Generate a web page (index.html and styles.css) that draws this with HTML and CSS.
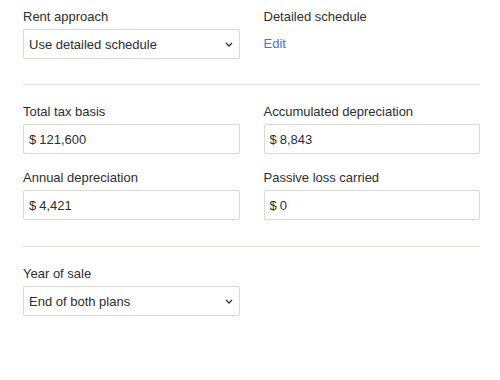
FILE: index.html
```html
<!DOCTYPE html>
<html lang="en">
<head>
    <meta charset="UTF-8">
    <title>Rental property</title>
    <link rel="stylesheet" href="styles.css">
</head>
<body>
    <div class="panel">
        <div class="section grid">
            <div class="field">
                <div class="label">Rent approach</div>
                <div class="select">
                    <span>Use detailed schedule</span>
                    <svg class="chev" width="8" height="5" viewBox="0 0 8 5"><path d="M1 1l3 3 3-3" fill="none" stroke="#333" stroke-width="1.3"/></svg>
                </div>
            </div>
            <div class="field">
                <div class="label">Detailed schedule</div>
                <a class="link" href="#">Edit</a>
            </div>
        </div>

        <div class="section grid values">
            <div class="field">
                <div class="label">Total tax basis</div>
                <div class="input"><span class="cur">$</span>121,600</div>
            </div>
            <div class="field">
                <div class="label">Accumulated depreciation</div>
                <div class="input"><span class="cur">$</span>8,843</div>
            </div>
            <div class="field">
                <div class="label">Annual depreciation</div>
                <div class="input"><span class="cur">$</span>4,421</div>
            </div>
            <div class="field">
                <div class="label">Passive loss carried</div>
                <div class="input"><span class="cur">$</span>0</div>
            </div>
        </div>

        <div class="section grid last">
            <div class="field">
                <div class="label">Year of sale</div>
                <div class="select">
                    <span>End of both plans</span>
                    <svg class="chev" width="8" height="5" viewBox="0 0 8 5"><path d="M1 1l3 3 3-3" fill="none" stroke="#333" stroke-width="1.3"/></svg>
                </div>
            </div>
        </div>
    </div>
</body>
</html>
```

FILE: styles.css
```css
:root {
    --text: #2e2e2e;
    --line: #e4e0da;
    --box-border: #dcd8d2;
    --blue: #5170de;
}
* {
    box-sizing: border-box;
    margin: 0;
    padding: 0;
}
body {
    font-family: 'Liberation Sans', Arial, sans-serif;
    font-size: 13px;
    color: var(--text);
    background: #fff;
}
.panel {
    width: 480px;
    padding: 8px 0 0 23px;
}
.section {
    padding: 0 0 25px 0;
    border-bottom: 1px solid var(--line);
    margin-bottom: 18px;
}
.section.values {
    padding-bottom: 26px;
}
.section.last {
    border-bottom: none;
}
.grid {
    display: grid;
    grid-template-columns: 1fr 1fr;
    column-gap: 24px;
    row-gap: 15px;
}
.label {
    line-height: 17px;
    margin-bottom: 4px;
}
.select, .input {
    height: 30px;
    border: 1px solid var(--box-border);
    border-radius: 2px;
    display: flex;
    align-items: center;
    padding: 0 6px 0 5px;
}
.select {
    justify-content: space-between;
    padding-right: 6px;
}
.cur {
    margin-right: 3px;
}
.link {
    display: inline-block;
    color: var(--blue);
    text-decoration: none;
    line-height: 30px;
}
```
